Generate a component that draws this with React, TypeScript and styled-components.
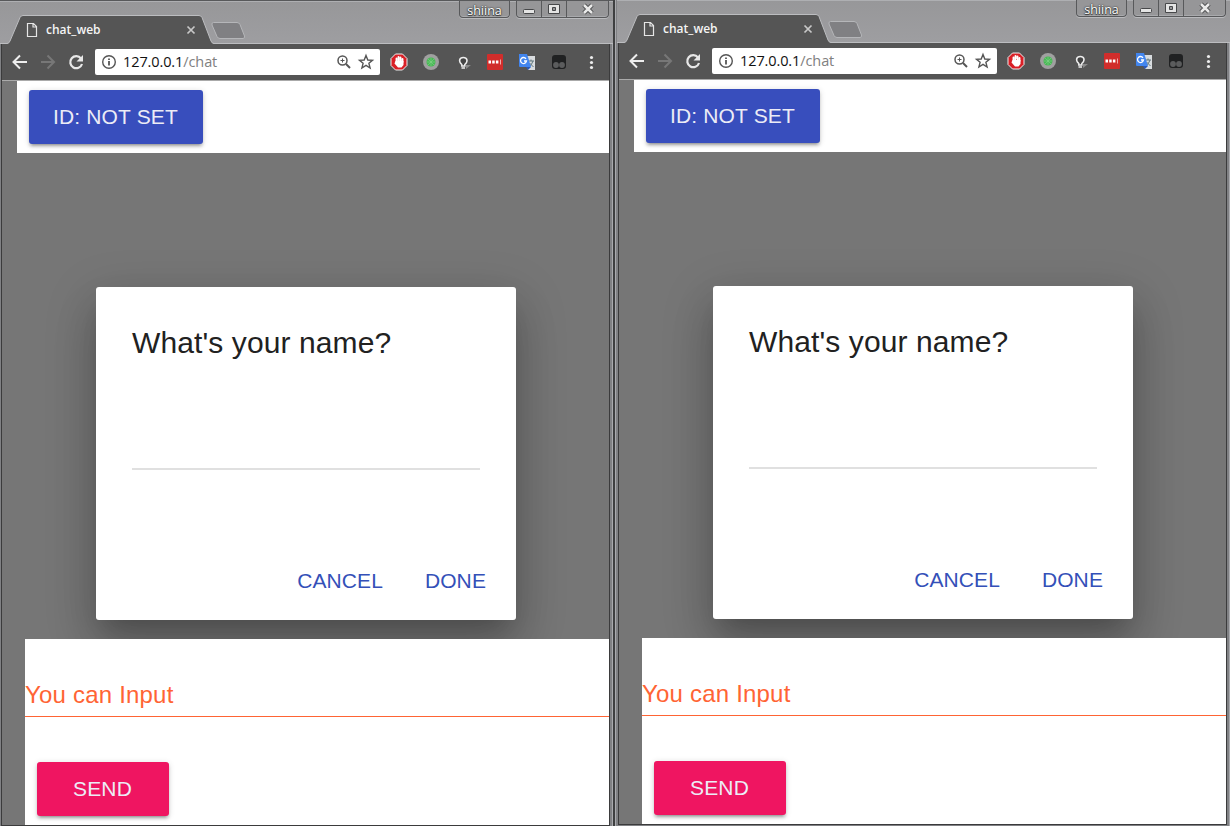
import React from "react";
import styled, { createGlobalStyle } from "styled-components";

const Global = createGlobalStyle`
  * { box-sizing: border-box; }
  body { margin: 0; background: #77787a; overflow: hidden; }
`;

const Desktop = styled.div`
  display: flex;
  align-items: flex-start;
  width: 1230px;
  height: 826px;
  overflow: hidden;
  font-family: "Liberation Sans", Arial, sans-serif;
`;

const Divider = styled.div`
  width: 4px;
  height: 826px;
  flex: none;
  border-left: 2px solid #3e3f40;
  border-right: 1px solid #808184;
  background: #a9aaae;
`;

const Window = styled.div<{ $raised?: boolean }>`
  width: 613px;
  height: 827px;
  flex: none;
  margin-top: ${(p) => (p.$raised ? "-1px" : "0")};
  display: flex;
  flex-direction: column;
  background: #808184;
  box-shadow: inset -1px 0 0 #a9aaae;
`;

const TitleBar = styled.div`
  height: 44px;
  flex: none;
  display: flex;
  justify-content: space-between;
  align-items: flex-start;
  border-top: 1px solid #58595b;
  box-shadow: inset 0 1px 0 #aeafb2, inset 0 -1px 0 #bcbdc0;
  background: linear-gradient(#979799, #9e9ea1);
`;

const TabStrip = styled.div`
  position: relative;
  width: 260px;
  height: 43px;
`;

const TabShape = styled.svg`
  display: block;
`;

const TabLabel = styled.div`
  position: absolute;
  left: 46px;
  top: 19px;
  line-height: 20px;
  font-family: "Open Sans", "Noto Sans", sans-serif;
  font-size: 12px;
  font-weight: 600;
  color: #f4f4f4;
`;

const Caption = styled.div`
  display: flex;
  gap: 6px;
  padding-right: 4px;
`;

const CaptionGroup = styled.div`
  display: flex;
  height: 17px;
  border: 1px solid #58595b;
  border-top: 0;
  border-radius: 0 0 4px 4px;
  box-shadow: 0 1px 0 #b9babd, inset 0 -1px 0 #a9aaad;
  background: #969698;
`;

const UserName = styled.div`
  width: 49px;
  text-align: center;
  font-family: "Open Sans", "Noto Sans", sans-serif;
  font-size: 12.5px;
  font-weight: 500;
  line-height: 19px;
  color: #fff;
  text-shadow: 0 0 2px #333, 0 1px 1px #333, 0 0 1px #333;
`;

const CaptionButton = styled.div<{ $width: number }>`
  width: ${(p) => p.$width}px;
  display: flex;
  justify-content: center;
  & + & { border-left: 1px solid #58595b; }
`;

const Client = styled.div`
  width: 609px;
  margin-left: 1px;
  height: 782px;
  display: flex;
  flex-direction: column;
  border: 1px solid #3b3b3c;
  border-top: 0;
  overflow: hidden;
`;

const Toolbar = styled.div`
  height: 37px;
  flex: none;
  display: flex;
  align-items: center;
  background: #555;
  border-bottom: 1px solid #aaa;
`;

const NavIcons = styled.svg`
  flex: none;
`;

const Address = styled.div`
  width: 285px;
  height: 26px;
  flex: none;
  display: flex;
  align-items: center;
  padding: 0 5px 0 6px;
  background: #fff;
  border-radius: 2px;
`;

const Url = styled.div`
  flex: 1;
  padding-left: 6px;
  font-family: "Open Sans", "Noto Sans", sans-serif;
  font-size: 14.5px;
  letter-spacing: -0.1px;
  line-height: 24px;
  color: #111;
  span { color: #808080; }
`;

const Page = styled.div`
  flex: 1;
  position: relative;
  display: flex;
  flex-direction: column;
  background: #767676;
  overflow: hidden;
`;

const AppHeader = styled.div`
  position: relative;
  height: 72px;
  flex: none;
  margin-left: 15px;
  padding: 9px 12px;
  background: #fff;
`;

const RaisedButton = styled.div<{ $tone: string; $width: number }>`
  width: ${(p) => p.$width}px;
  height: 54px;
  display: flex;
  align-items: center;
  justify-content: center;
  border-radius: 3px;
  background: ${(p) => p.$tone};
  color: #ececf6;
  font-size: 21px;
  line-height: 54px;
  white-space: nowrap;
  box-shadow: 0 3px 3px rgba(0, 0, 0, 0.16), 0 4px 2px -3px rgba(0, 0, 0, 0.24), 0 1px 6px rgba(0, 0, 0, 0.14);
`;

const Messages = styled.div`
  flex: 1;
`;

const Composer = styled.div`
  position: relative;
  height: 186px;
  flex: none;
  margin-left: 23px;
  display: flex;
  flex-direction: column;
  background: #fff;
`;

const Field = styled.div`
  height: 78px;
  padding-top: 40px;
  border-bottom: 1px solid #ff6434;
  color: #ff6434;
  font-size: 24px;
  line-height: 32px;
  white-space: nowrap;
`;

const SendRow = styled.div`
  padding: 45px 12px 0;
`;

const Dialog = styled.div`
  position: absolute;
  left: 94px;
  top: 206px;
  width: 420px;
  height: 333px;
  display: flex;
  flex-direction: column;
  background: #fff;
  border-radius: 3px;
`;

const DialogShade = styled.div`
  position: absolute;
  left: 94px;
  top: 206px;
  width: 420px;
  height: 333px;
  border-radius: 3px;
  box-shadow: 0 14px 50px 6px rgba(0, 0, 0, 0.14), 0 16px 22px -10px rgba(0, 0, 0, 0.14), 0 28px 45px 0 rgba(0, 0, 0, 0.16);
`;

const DialogTitle = styled.div`
  padding: 36px 36px 0;
  font-size: 30px;
  line-height: 40px;
  color: #212121;
  white-space: nowrap;
`;

const DialogInput = styled.div`
  height: 107px;
  margin: 0 36px;
  border-bottom: 2px solid #e0e0e0;
`;

const DialogActions = styled.div`
  margin-top: auto;
  display: flex;
  justify-content: flex-end;
  gap: 42px;
  height: 53px;
  padding-right: 30px;
  font-size: 21px;
  line-height: 28px;
  color: #3450b8;
`;

function Tabs() {
  return (
    <TabStrip>
      <TabShape width="260" height="43" viewBox="0 1 260 43">
        <path d="M7 44Q9 43.5 10 41L20 17.5Q21 15.5 23 15.5H199Q201 15.5 202 17.5L211 41Q212 43.5 214 44Z" fill="#555" />
        <path d="M0 43.5H7Q9 43.5 10 41L20 17.5Q21 15.5 23 15.5H199Q201 15.5 202 17.5L211 41Q212 43.5 214 43.5H260" fill="none" stroke="#bcbdc0" />
        <path d="M213.5 22.5H237Q239 22.5 240 24.5L244.5 36Q245 38.5 243 38.5H220Q218 38.5 217 36.5L212 25Q211.500 22.500 213.500 22.500Z" fill="#808083" stroke="#b5b6b9" />
        <path d="M27.500 23.500H33.500L36.500 26.500V36.500H27.500ZM33 24V27H36.500" fill="none" stroke="#e6e6e6" strokeWidth="1.2" />
        <path d="M187.500 26.500L194.500 33.500M194.500 26.500L187.500 33.500" stroke="#c8c8c8" strokeWidth="1.7" />
      </TabShape>
      <TabLabel>chat_web</TabLabel>
    </TabStrip>
  );
}

function WindowButtons() {
  return (
    <Caption>
      <CaptionGroup><UserName>shiina</UserName></CaptionGroup>
      <CaptionGroup>
        <CaptionButton $width={24}>
          <svg width="14" height="16"><rect x="1.500" y="8.500" width="11" height="4" rx="1" fill="#e4e4e4" stroke="#47484a" /></svg>
        </CaptionButton>
        <CaptionButton $width={25}>
          <svg width="14" height="16"><path d="M1.500 3.500H12.500V12.500H1.500ZM5.500 6.500V9.500H8.500V6.500Z" fill="#e4e4e4" fillRule="evenodd" stroke="#47484a" /></svg>
        </CaptionButton>
        <CaptionButton $width={42}>
          <svg width="14" height="16"><path d="M3 4L11 12M11 4L3 12" stroke="#47484a" strokeWidth="4.500" /><path d="M3 4L11 12M11 4L3 12" stroke="#e9e9e9" strokeWidth="2.500" /></svg>
        </CaptionButton>
      </CaptionGroup>
    </Caption>
  );
}

function Navigation() {
  return (
    <NavIcons width="93" height="36" viewBox="2 44 93 36" fill="none">
      <path d="M27 62H14M20 55.500L13.500 62L20 68.500" stroke="#eee" strokeWidth="2" />
      <path d="M41 62H54M47.500 55.500L54 62L47.500 68.500" stroke="#777" strokeWidth="2" />
      <path d="M81 58.500A6 6 0 1 0 82 64" stroke="#e8e8e8" strokeWidth="2.200" />
      <path d="M83 55V61.500H76.500Z" fill="#e8e8e8" />
    </NavIcons>
  );
}

function Extensions() {
  return (
    <svg width="227" height="36" viewBox="380 44 227 36">
      <path d="M395.500 54H402.500L407 58.500V65.500L402.500 70H395.500L391 65.500V58.500Z" fill="#d91f26" stroke="#eee" />
      <path d="M396.500 62V58.500M398.500 61V57M400.500 61V57.500M402.500 62V59" stroke="#fff" strokeWidth="1.900" strokeLinecap="round" />
      <path d="M395.500 61H403.500V65L401.500 67.500H398L394.500 63.500Z" fill="#fff" />
      <circle cx="431" cy="62" r="8" fill="#a0a0a0" />
      <circle cx="431" cy="62" r="4.500" fill="#48b855" />
      <path d="M428 59L434 65M434 59L428 65M431 58V66M427 62H435" stroke="#83d58a" strokeWidth=".6" />
      <path d="M461.800 64.500C458 61 459.500 57.500 463.300 57.500S468.600 61 464.800 64.500V66H461.800Z" fill="#444" stroke="#eee" strokeWidth="1.500" />
      <path d="M461.500 68H465" stroke="#eee" strokeWidth="1.500" />
      <path d="M466 65H471L466 69Z" fill="#8a8a8a" />
      <rect x="487" y="54" width="16" height="16" rx="1" fill="#d12d2b" />
      <path d="M488.500 62H498.500" stroke="#fff" strokeWidth="3" strokeDasharray="2.500 1.200" />
      <path d="M500.500 59.500V64.500" stroke="#f1aaa9" />
      <path d="M526 56H535V70H528Z" fill="#d9dcdf" />
      <path d="M528 61H534M531 59.500V61M533 61Q532 65 528.500 67M529.500 63L533.500 67" stroke="#60777d" fill="none" />
      <path d="M519 54H527L531 67H520Q519 67 519 66Z" fill="#4285ee" />
      <path d="M526 67H531L528 70Z" fill="#2858b8" />
      <path d="M526 58.800A3 3 0 1 0 526.500 61H524" fill="none" stroke="#fff" strokeWidth="1.300" />
      <rect x="552" y="55" width="14" height="14" rx="3" fill="#202122" />
      <circle cx="556" cy="65" r="2.900" fill="#5b5c5d" />
      <circle cx="562" cy="65" r="2.900" fill="#5b5c5d" />
      <g fill="#eee"><circle cx="591.500" cy="57.500" r="1.600" /><circle cx="591.500" cy="62.500" r="1.600" /><circle cx="591.500" cy="67.500" r="1.600" /></g>
    </svg>
  );
}

const HeaderText = styled.span`margin-left: -1px; letter-spacing: 0.15px;`;
const SendText = styled.span`margin-left: -1px; letter-spacing: 0.2px;`;
const FieldText = styled.span`letter-spacing: 0.2px;`;
const TitleText = styled.span`letter-spacing: 0.1px;`;
const ActionText = styled.span`letter-spacing: 0.1px;`;

function ChatWindow({ raised }: { raised?: boolean }) {
  return (
    <Window $raised={raised}>
      <TitleBar>
        <Tabs />
        <WindowButtons />
      </TitleBar>
      <Client>
        <Toolbar>
          <Navigation />
          <Address>
            <svg width="16" height="16" viewBox="0 0 16 16" fill="none" stroke="#555">
              <circle cx="8" cy="8" r="6.300" strokeWidth="1.400" />
              <path d="M8 7V11.500M8 4.500V6" strokeWidth="1.800" />
            </svg>
            <Url>127.0.0.1<span>/chat</span></Url>
            <svg width="40" height="18" viewBox="335 53 40 18" fill="none" stroke="#555">
              <circle cx="342.500" cy="60.500" r="4.500" strokeWidth="1.500" />
              <path d="M346 64L350 68" strokeWidth="2" />
              <path d="M340.500 60.500H344.500M342.500 58.500V62.500" />
              <path d="M366 55.500L367.800 60L372.500 60.300L368.900 63.300L370.100 68L366 65.400L361.900 68L363.100 63.300L359.500 60.300L364.200 60Z" strokeWidth="1.400" />
            </svg>
          </Address>
          <Extensions />
        </Toolbar>
        <Page>
          <DialogShade />
          <AppHeader>
            <RaisedButton $tone="#384ebd" $width={174}><HeaderText>ID: NOT SET</HeaderText></RaisedButton>
          </AppHeader>
          <Messages />
          <Composer>
            <Field><FieldText>You can Input</FieldText></Field>
            <SendRow>
              <RaisedButton $tone="#ef1561" $width={132}><SendText>SEND</SendText></RaisedButton>
            </SendRow>
          </Composer>
          <Dialog>
            <DialogTitle><TitleText>What's your name?</TitleText></DialogTitle>
            <DialogInput />
            <DialogActions>
              <ActionText>CANCEL</ActionText>
              <ActionText>DONE</ActionText>
            </DialogActions>
          </Dialog>
        </Page>
      </Client>
    </Window>
  );
}

export default function App() {
  return (
    <>
      <Global />
      <Desktop>
        <ChatWindow />
        <Divider />
        <ChatWindow raised />
      </Desktop>
    </>
  );
}
